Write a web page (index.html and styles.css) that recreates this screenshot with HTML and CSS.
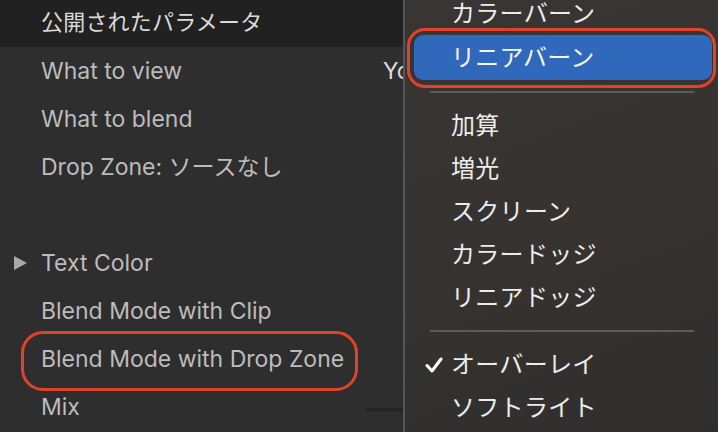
FILE: index.html
```html
<!DOCTYPE html>
<html lang="ja">
<head>
  <meta charset="UTF-8">
  <title>公開されたパラメータ</title>
  <link rel="stylesheet" href="styles.css">
</head>
<body>
  <div class="screen">
    <div class="panel">
      <div class="panel-header">公開されたパラメータ</div>
      <div class="param">What to view <span class="value">You</span></div>
      <div class="param">What to blend</div>
      <div class="param">Drop Zone: ソースなし</div>
      <div class="param"></div>
      <div class="param group"><span class="disclosure"></span>Text Color</div>
      <div class="param">Blend Mode with Clip</div>
      <div class="param marked">Blend Mode with Drop Zone</div>
      <div class="param">Mix <span class="track"></span></div>
    </div>

    <div class="menu">
      <ul class="menu-list">
        <li class="item">カラーバーン</li>
        <li class="item selected">リニアバーン</li>
        <li class="sep"></li>
        <li class="item">加算</li>
        <li class="item">増光</li>
        <li class="item">スクリーン</li>
        <li class="item">カラードッジ</li>
        <li class="item">リニアドッジ</li>
        <li class="sep"></li>
        <li class="item">
          <svg class="check" width="18" height="16" viewBox="0 0 18 16">
            <polyline points="2,8.5 7,14 16,2" fill="none" stroke="#fff" stroke-width="3" stroke-linecap="round" stroke-linejoin="round"/>
          </svg>
          オーバーレイ
        </li>
        <li class="item">ソフトライト</li>
      </ul>
    </div>
  </div>
</body>
</html>
```

FILE: styles.css
```css
body {
  margin: 0;
  background-color: #2e2e2e;
  font-family: Inter, "Noto Sans CJK JP", sans-serif;
  overflow: hidden;
}
.screen {
  display: flex;
  width: 718px;
  height: 432px;
  overflow: hidden;
}
.panel {
  width: 403px;
  flex-shrink: 0;
  background-color: #2e2e2e;
  overflow: hidden;
}
.panel-header {
  height: 47px;
  line-height: 45px;
  padding-left: 41px;
  background-color: #212121;
  color: #dadada;
  font-size: 22px;
  letter-spacing: 0.2px;
}
.param {
  position: relative;
  height: 48px;
  line-height: 48px;
  padding-left: 41px;
  color: #bcbcbc;
  font-size: 23px;
  white-space: nowrap;
}
.param .value {
  position: absolute;
  left: 383px;
  color: #dcdcdc;
}
.disclosure {
  position: absolute;
  left: 14px;
  top: 17px;
  width: 0;
  height: 0;
  border-top: 7px solid transparent;
  border-bottom: 7px solid transparent;
  border-left: 13px solid #a8a8a8;
}
.track {
  position: absolute;
  left: 365px;
  top: 25px;
  width: 60px;
  height: 3px;
  border-radius: 2px;
  background-color: #232323;
}
.marked::after {
  content: "";
  position: absolute;
  left: 21px;
  top: -4px;
  width: 331px;
  height: 54px;
  border: 3px solid #e0432c;
  border-radius: 22px;
}

.menu {
  flex: 1;
  border-left: 2px solid #555;
  background: linear-gradient(160deg, #383533 0%, #35322f 60%, #302e2d 100%);
  color: #ececec;
  font-size: 24px;
  letter-spacing: 0.3px;
}
.menu-list {
  list-style: none;
  margin: -8px 0 0 0;
  padding: 0;
}
.item {
  position: relative;
  height: 43px;
  line-height: 43px;
  padding-left: 46px;
  white-space: nowrap;
}
.item.selected {
  height: 45px;
  line-height: 45px;
  margin: 0 6px 0 9px;
  padding-left: 37px;
  background-color: #3068bb;
  border-radius: 9px;
  color: #f4f4f4;
}
.item.selected::after {
  content: "";
  position: absolute;
  left: -7px;
  top: -7px;
  right: -4px;
  bottom: -8px;
  border: 3px solid #e0432c;
  border-radius: 18px;
}
.check {
  position: absolute;
  left: 20px;
  top: 14px;
}
.sep {
  height: 24px;
  display: flex;
  align-items: center;
  padding: 0 24px 0 25px;
}
.sep::before {
  content: "";
  flex: 1;
  height: 2px;
  background-color: #5d5b59;
}
```
